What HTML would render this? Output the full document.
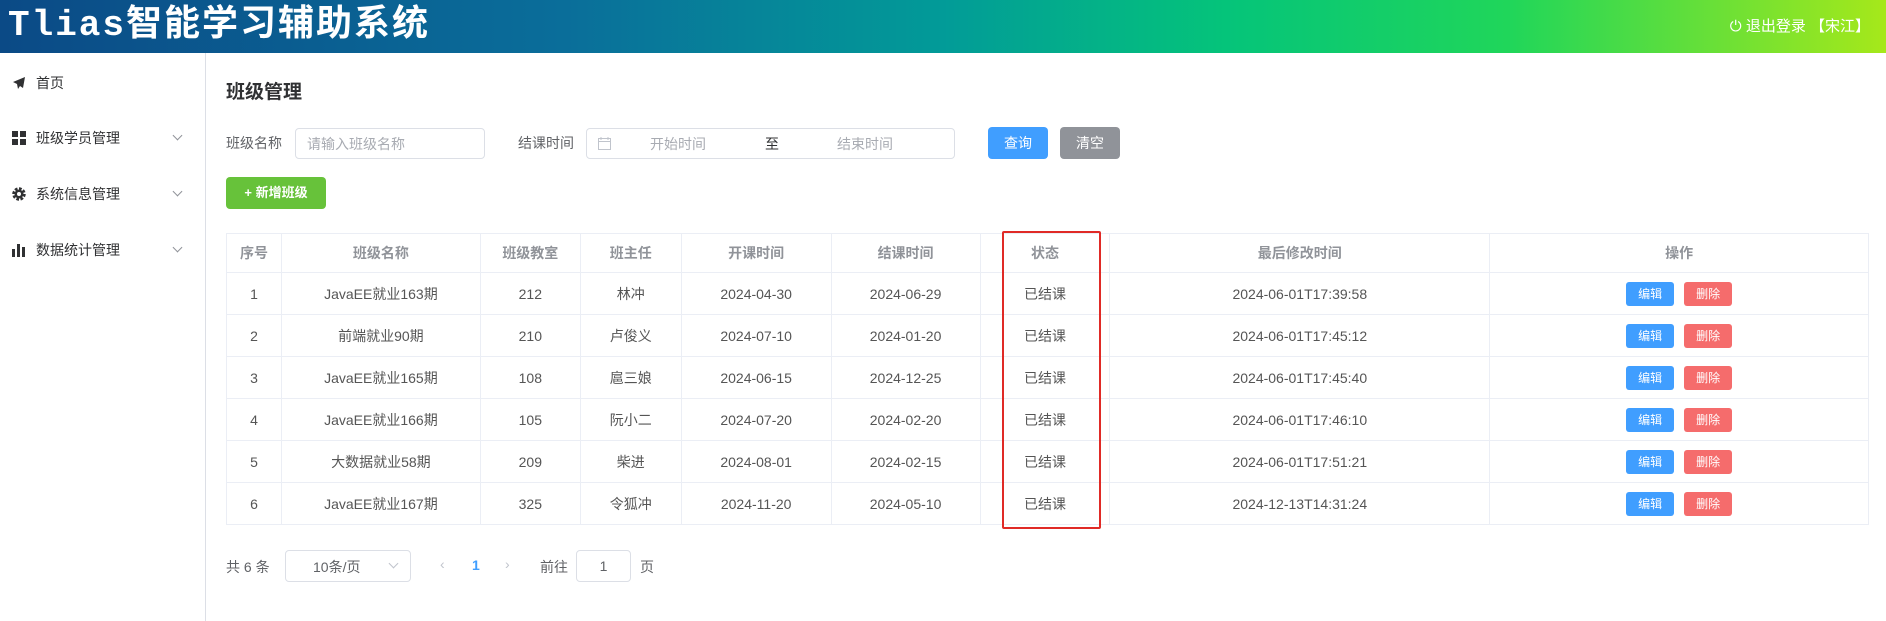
<!DOCTYPE html>
<html><head><meta charset="utf-8"><style>
*{margin:0;padding:0;box-sizing:border-box}
body{width:1886px;height:621px;overflow:hidden;background:#fff;font-family:"Liberation Sans","Noto Sans CJK SC",sans-serif;color:#606266;font-size:14px;position:relative}
.hdr{position:absolute;left:0;top:0;width:1886px;height:53px;background:linear-gradient(90deg,#0b4a86 0%,#0a6e9a 30%,#029b98 50%,#05c47a 65%,#20d65a 80%,#a6e81a 100%)}
.title{position:absolute;left:8px;top:4px;font-family:"Liberation Mono","Noto Sans CJK SC",monospace;font-weight:bold;font-size:36px;color:#fff;letter-spacing:2px;line-height:44px}
.logout{position:absolute;right:16px;top:15px;color:#fff;font-size:15px}
.side{position:absolute;left:0;top:53px;width:206px;height:568px;border-right:1px solid #dcdfe6}
.mi{position:absolute;left:12px;font-size:14px;color:#303133;height:20px;line-height:20px;width:180px}
.mi span{position:absolute;left:24px}
.mi .ch{position:absolute;left:162px;top:4px;width:7px;height:7px;border-right:1px solid #909399;border-bottom:1px solid #909399;transform:rotate(45deg)}
.a{position:absolute}
.inp{position:absolute;border:1px solid #dcdfe6;border-radius:4px;background:#fff}
.btn{position:absolute;border-radius:4px;color:#fff;font-size:14px;text-align:center}
table{position:absolute;left:226px;top:233px;border-collapse:collapse;width:1643px;font-size:14px}
td,th{border:1px solid #ebeef5;text-align:center;height:42px;color:#555;font-weight:normal}
th{height:39px;color:#909399;font-weight:bold}
.e,.d{display:inline-block;width:48px;height:24px;line-height:24px;border-radius:3px;color:#fff;font-size:12px;margin:0 5px}
.e{background:#409eff}.d{background:#f56c6c}
</style></head><body>
<div class="hdr"><div class="title">Tlias智能学习辅助系统</div><div class="logout">⏻ 退出登录 【宋江】</div></div>
<div class="side">
<div class="mi" style="top:20px"><svg width="14" height="14" viewBox="0 0 14 14" style="position:absolute;top:3px"><path d="M13 1L1 6l4 2 1 5 2-3 3 2z" fill="#303133"/></svg><span>首页</span></div>
<div class="mi" style="top:75px"><svg width="14" height="14" viewBox="0 0 14 14" style="position:absolute;top:3px"><rect x="0" y="0" width="6" height="6" fill="#303133"/><rect x="8" y="0" width="6" height="6" fill="#303133"/><rect x="0" y="8" width="6" height="6" fill="#303133"/><rect x="8" y="8" width="6" height="6" fill="#303133"/></svg><span>班级学员管理</span><i class="ch"></i></div>
<div class="mi" style="top:131px"><svg width="14" height="14" viewBox="0 0 14 14" style="position:absolute;top:3px"><circle cx="7" cy="7" r="5" fill="none" stroke="#303133" stroke-width="3.5" stroke-dasharray="2.5 1.4"/><circle cx="7" cy="7" r="4.5" fill="#303133"/><circle cx="7" cy="7" r="2" fill="#fff"/></svg><span>系统信息管理</span><i class="ch"></i></div>
<div class="mi" style="top:187px"><svg width="14" height="14" viewBox="0 0 14 14" style="position:absolute;top:3px"><rect x="0" y="6" width="3" height="8" fill="#303133"/><rect x="5" y="1" width="3" height="13" fill="#303133"/><rect x="10" y="4" width="3" height="10" fill="#303133"/></svg><span>数据统计管理</span><i class="ch"></i></div>
</div>
<div class="a" style="left:226px;top:77px;font-size:19px;font-weight:bold;color:#303133">班级管理</div>
<div class="a" style="left:226px;top:133px">班级名称</div>
<div class="inp" style="left:295px;top:128px;width:190px;height:31px"><span class="a" style="left:11px;top:5px;color:#a8abb2;font-size:14px">请输入班级名称</span></div>
<div class="a" style="left:518px;top:133px">结课时间</div>
<div class="inp" style="left:586px;top:128px;width:369px;height:31px">
<svg width="13" height="13" viewBox="0 0 13 13" class="a" style="left:11px;top:8px"><rect x="0.5" y="1.5" width="12" height="11" fill="none" stroke="#c0c4cc"/><path d="M0.5 4.5h12M3 0v3M10 0v3" stroke="#c0c4cc"/></svg>
<span class="a" style="left:63px;top:5px;color:#a8abb2">开始时间</span><span class="a" style="left:178px;top:5px;color:#303133">至</span><span class="a" style="left:250px;top:5px;color:#a8abb2">结束时间</span></div>
<div class="btn" style="left:988px;top:127px;width:60px;height:32px;line-height:32px;background:#409eff">查询</div>
<div class="btn" style="left:1060px;top:127px;width:60px;height:32px;line-height:32px;background:#909399">清空</div>
<div class="btn" style="left:226px;top:177px;width:100px;height:32px;line-height:32px;background:#67c23a;font-size:13px;font-weight:bold">+ 新增班级</div>
<table>
<colgroup><col style="width:55px"><col style="width:199px"><col style="width:100px"><col style="width:101px"><col style="width:150px"><col style="width:149px"><col style="width:130px"><col style="width:380px"><col style="width:379px"></colgroup>
<tr><th>序号</th><th>班级名称</th><th>班级教室</th><th>班主任</th><th>开课时间</th><th>结课时间</th><th>状态</th><th>最后修改时间</th><th>操作</th></tr>
<tr><td>1</td><td>JavaEE就业163期</td><td>212</td><td>林冲</td><td>2024-04-30</td><td>2024-06-29</td><td>已结课</td><td>2024-06-01T17:39:58</td><td><span class="e">编辑</span><span class="d">删除</span></td></tr>
<tr><td>2</td><td>前端就业90期</td><td>210</td><td>卢俊义</td><td>2024-07-10</td><td>2024-01-20</td><td>已结课</td><td>2024-06-01T17:45:12</td><td><span class="e">编辑</span><span class="d">删除</span></td></tr>
<tr><td>3</td><td>JavaEE就业165期</td><td>108</td><td>扈三娘</td><td>2024-06-15</td><td>2024-12-25</td><td>已结课</td><td>2024-06-01T17:45:40</td><td><span class="e">编辑</span><span class="d">删除</span></td></tr>
<tr><td>4</td><td>JavaEE就业166期</td><td>105</td><td>阮小二</td><td>2024-07-20</td><td>2024-02-20</td><td>已结课</td><td>2024-06-01T17:46:10</td><td><span class="e">编辑</span><span class="d">删除</span></td></tr>
<tr><td>5</td><td>大数据就业58期</td><td>209</td><td>柴进</td><td>2024-08-01</td><td>2024-02-15</td><td>已结课</td><td>2024-06-01T17:51:21</td><td><span class="e">编辑</span><span class="d">删除</span></td></tr>
<tr><td>6</td><td>JavaEE就业167期</td><td>325</td><td>令狐冲</td><td>2024-11-20</td><td>2024-05-10</td><td>已结课</td><td>2024-12-13T14:31:24</td><td><span class="e">编辑</span><span class="d">删除</span></td></tr>
</table>
<div class="a" style="left:1002px;top:231px;width:99px;height:298px;border:2px solid #e02a26;border-radius:2px"></div>
<div class="a" style="left:226px;top:557px;font-size:14px">共 6 条</div>
<div class="inp" style="left:285px;top:550px;width:126px;height:32px"><span class="a" style="left:27px;top:6px">10条/页</span><i class="a" style="left:104px;top:9px;width:7px;height:7px;border-right:1px solid #c0c4cc;border-bottom:1px solid #c0c4cc;transform:rotate(45deg)"></i></div>
<div class="a" style="left:440px;top:556px;color:#c0c4cc">‹</div>
<div class="a" style="left:472px;top:557px;color:#409eff;font-weight:bold">1</div>
<div class="a" style="left:505px;top:556px;color:#c0c4cc">›</div>
<div class="a" style="left:540px;top:557px">前往</div>
<div class="inp" style="left:576px;top:550px;width:55px;height:32px;text-align:center;line-height:30px">1</div>
<div class="a" style="left:640px;top:557px">页</div>
</body></html>
